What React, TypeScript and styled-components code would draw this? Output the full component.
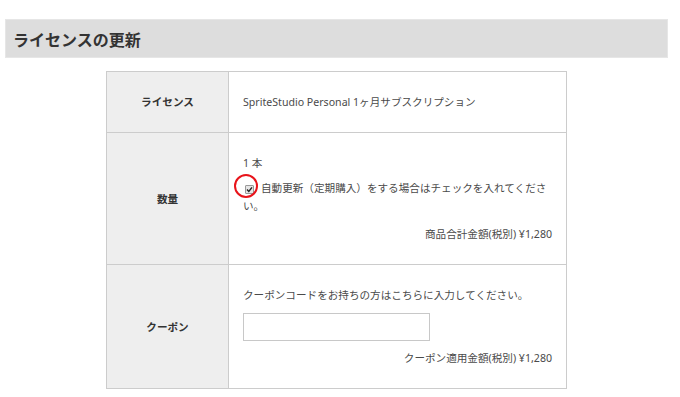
import { createGlobalStyle, styled } from "styled-components";

const GlobalStyle = createGlobalStyle`
  body {
    margin: 0;
    background: #fff;
    font-family: "Noto Sans", "Noto Sans CJK JP", sans-serif;
    color: #333;
  }
`;

export default function App() {
  return (
    <>
      <GlobalStyle />
      <PageWrapper>
        <SectionTitle>ライセンスの更新</SectionTitle>

        <LicenseTable>
          <tbody>
            <tr>
              <LabelCell>ライセンス</LabelCell>
              <ValueCell>SpriteStudio Personal 1ヶ月サブスクリプション</ValueCell>
            </tr>
            <tr>
              <LabelCell>数量</LabelCell>
              <ValueCell>
                <Line>1 本</Line>
                <CheckLine>
                  <CheckMark>
                    <svg width="7" height="7" viewBox="0 0 7 7">
                      <path d="M1 3.6 L2.8 5.4 L6 1.4" fill="none" stroke="#222" strokeWidth="1.4" />
                    </svg>
                    <RedCircle />
                  </CheckMark>
                  自動更新（定期購入）をする場合はチェックを入れてください。
                </CheckLine>
                <PriceLine>商品合計金額(税別) ¥1,280</PriceLine>
              </ValueCell>
            </tr>
            <tr>
              <LabelCell>クーポン</LabelCell>
              <ValueCell>
                <Line>クーポンコードをお持ちの方はこちらに入力してください。</Line>
                <CouponInput type="text" />
                <PriceLine $gap={8}>クーポン適用金額(税別) ¥1,280</PriceLine>
              </ValueCell>
            </tr>
          </tbody>
        </LicenseTable>
      </PageWrapper>
    </>
  );
}

const PageWrapper = styled.main`
  display: flex;
  flex-direction: column;
  align-items: center;
  margin: 19px 12px 0 5px;
`;

const SectionTitle = styled.h2`
  align-self: stretch;
  margin: 0 0 13px;
  height: 39px;
  box-sizing: border-box;
  padding: 0 7px;
  display: flex;
  align-items: center;
  background: #dddddd;
  border: 1px solid #e6e6e6;
  font-family: "Noto Sans CJK JP", sans-serif;
  font-size: 16px;
  font-weight: bold;
  color: #333;
`;

const LicenseTable = styled.table`
  width: 461px;
  border-collapse: collapse;
  font-size: 10.6px;
  line-height: 18px;
`;

const LabelCell = styled.th`
  width: 122px;
  box-sizing: border-box;
  background: #eeeeee;
  border: 1px solid #cccccc;
  font-family: "Noto Sans CJK JP", sans-serif;
  font-weight: bold;
  text-align: center;
  vertical-align: middle;
  color: #333;
`;

const ValueCell = styled.td`
  border: 1px solid #cccccc;
  padding: 21px 14px;
  vertical-align: middle;
  color: #4a4a4a;
`;

const Line = styled.div``;

const CheckLine = styled.div`
  margin-top: 7px;
`;

const CheckMark = styled.span`
  position: relative;
  display: inline-flex;
  align-items: center;
  justify-content: center;
  width: 9px;
  height: 9px;
  box-sizing: border-box;
  margin: 0 7px 0 2px;
  vertical-align: -1px;
  border: 1px solid #999;
  border-radius: 1px;
  background: #e6e6e6;
`;

const RedCircle = styled.span`
  position: absolute;
  left: -12px;
  top: -12px;
  width: 24px;
  height: 24px;
  box-sizing: border-box;
  border: 2px solid #e8141b;
  border-radius: 50%;
`;

const PriceLine = styled.div<{ $gap?: number }>`
  margin-top: ${({ $gap }) => $gap ?? 10}px;
  text-align: right;
`;

const CouponInput = styled.input`
  display: block;
  margin-top: 9px;
  width: 187px;
  height: 28px;
  box-sizing: border-box;
  border: 1px solid #c8c8c8;
  padding: 0 6px;
  font: inherit;
`;
